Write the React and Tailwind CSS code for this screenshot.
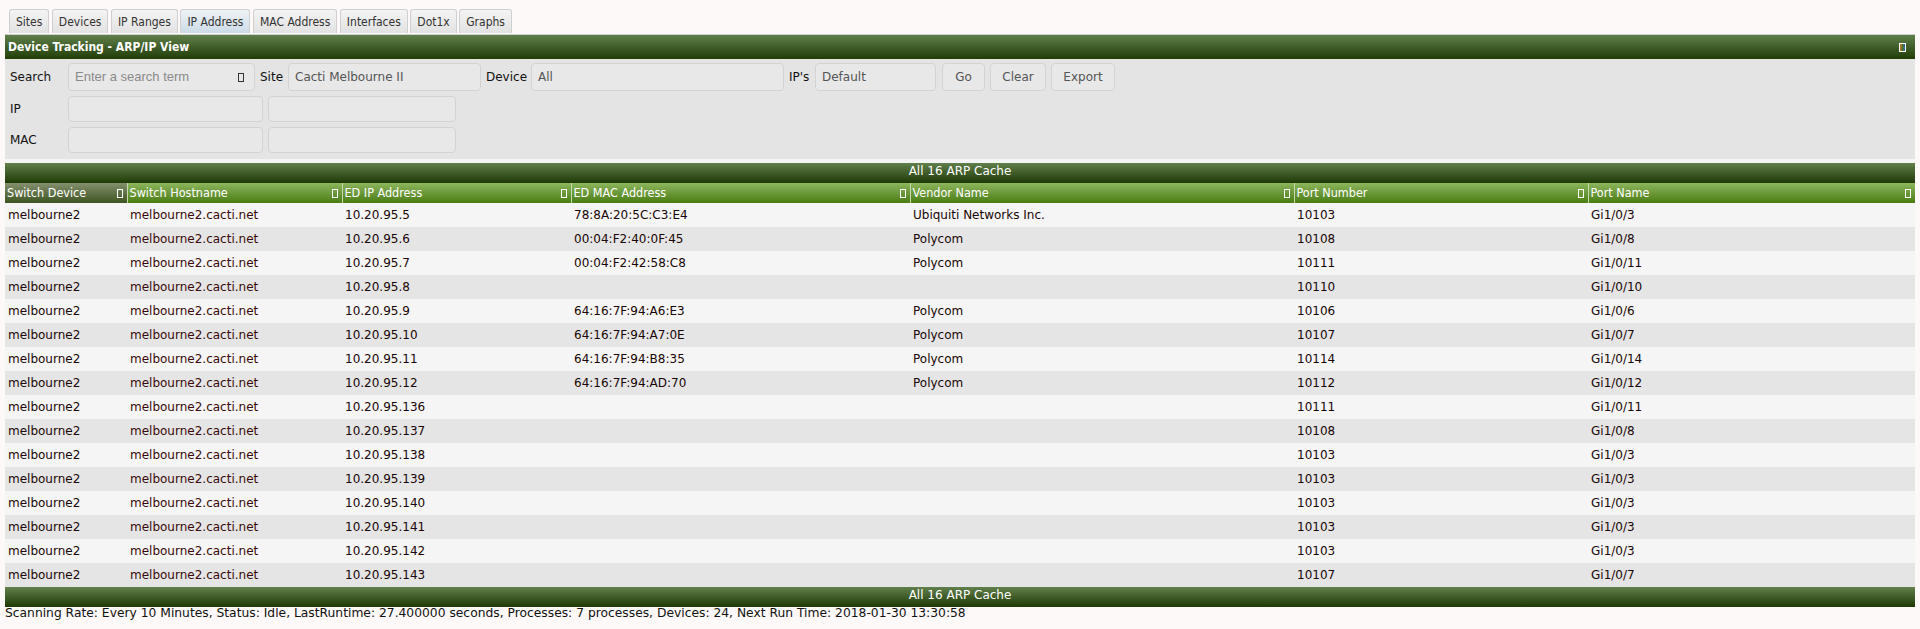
import React from "react";

const tabs = ["Sites", "Devices", "IP Ranges", "IP Address", "MAC Address", "Interfaces", "Dot1x", "Graphs"];

const cols = [
  { label: "Switch Device", w: 122 },
  { label: "Switch Hostname", w: 215 },
  { label: "ED IP Address", w: 229 },
  { label: "ED MAC Address", w: 339 },
  { label: "Vendor Name", w: 384 },
  { label: "Port Number", w: 294 },
  { label: "Port Name", w: 327 },
];

const rows = [
  ["10.20.95.5", "78:8A:20:5C:C3:E4", "Ubiquiti Networks Inc.", "10103", "Gi1/0/3"],
  ["10.20.95.6", "00:04:F2:40:0F:45", "Polycom", "10108", "Gi1/0/8"],
  ["10.20.95.7", "00:04:F2:42:58:C8", "Polycom", "10111", "Gi1/0/11"],
  ["10.20.95.8", "", "", "10110", "Gi1/0/10"],
  ["10.20.95.9", "64:16:7F:94:A6:E3", "Polycom", "10106", "Gi1/0/6"],
  ["10.20.95.10", "64:16:7F:94:A7:0E", "Polycom", "10107", "Gi1/0/7"],
  ["10.20.95.11", "64:16:7F:94:B8:35", "Polycom", "10114", "Gi1/0/14"],
  ["10.20.95.12", "64:16:7F:94:AD:70", "Polycom", "10112", "Gi1/0/12"],
  ["10.20.95.136", "", "", "10111", "Gi1/0/11"],
  ["10.20.95.137", "", "", "10108", "Gi1/0/8"],
  ["10.20.95.138", "", "", "10103", "Gi1/0/3"],
  ["10.20.95.139", "", "", "10103", "Gi1/0/3"],
  ["10.20.95.140", "", "", "10103", "Gi1/0/3"],
  ["10.20.95.141", "", "", "10103", "Gi1/0/3"],
  ["10.20.95.142", "", "", "10103", "Gi1/0/3"],
  ["10.20.95.143", "", "", "10107", "Gi1/0/7"],
];

function Box({ className = "" }) {
  return <span className={`inline-block w-[6px] h-[9px] border border-current ${className}`} />;
}

function Field({ w, h = "h-[28px]", children, className = "" }) {
  return (
    <div className={`${w} ${h} flex items-center rounded-[4px] border border-[#d3d3d3] bg-[#e8e8e8] px-[6px] ${className}`}>
      {children}
    </div>
  );
}

function Btn({ w, children }) {
  return (
    <div className={`${w} h-[28px] flex items-center justify-center rounded-[4px] border border-[#d3d3d3] bg-[#e8e8e8] text-[#555]`}>
      {children}
    </div>
  );
}

function GreenBar({ children }) {
  return (
    <div className="h-[20px] pt-[1px] leading-[14px] text-center bg-gradient-to-b from-[#62804c] to-[#1f3a03] text-white text-[12px] font-['DejaVu_Sans',sans-serif]">
      {children}
    </div>
  );
}

export default function App() {
  return (
    <div className="min-h-[629px] bg-[#fdf9f8] font-['DejaVu_Sans',sans-serif] text-[12px] text-[#111]">
      <div className="flex gap-[2.5px] pl-[9px] pt-[9px] h-[34px]">
        {tabs.map((t) => (
          <div
            key={t}
            className={`h-[24px] px-[6px] flex items-center rounded-t-[3px] border border-b-0 border-[#cfcfcf] text-[#333] font-['DejaVu_Sans_Condensed','DejaVu_Sans',sans-serif] text-[12px] ${
              t === "IP Address" ? "bg-gradient-to-b from-[#eef2f6] to-[#cddbe7]" : "bg-gradient-to-b from-[#f4f4f4] to-[#e2e2e2]"
            }`}
          >
            {t}
          </div>
        ))}
      </div>

      <div className="mx-[5px] border-t border-[#cfcfcf]">
        <div className="h-[24px] flex items-center justify-between px-[3px] bg-gradient-to-b from-[#60804a] to-[#213d05] text-white font-bold text-[12px] font-['DejaVu_Sans_Condensed','DejaVu_Sans',sans-serif]">
          <span>Device Tracking - ARP/IP View</span>
          <span className="mr-[6px] w-[7px] h-[9px] border border-white bg-gradient-to-r from-[#c86a1e] via-[#4c7a2a] to-[#2f5fa8]" />
        </div>

        <div className="bg-[#e4e4e4] pt-[4px] pb-[6px] flex flex-col gap-[5px]">
          <div className="flex items-center h-[28px]">
            <span className="w-[63px] pl-[5px]">Search</span>
            <Field w="w-[187px]" className="justify-between">
              <span className="text-[#8a8a8a] text-[13px] font-['Liberation_Sans',sans-serif]">Enter a search term</span>
              <Box className="text-[#333] mr-[4px]" />
            </Field>
            <span className="ml-[5px] w-[28px]">Site</span>
            <Field w="w-[193px]"><span className="text-[#555]">Cacti Melbourne II</span></Field>
            <span className="ml-[5px] w-[45px]">Device</span>
            <Field w="w-[253px]"><span className="text-[#555]">All</span></Field>
            <span className="ml-[5px] w-[26px]">IP's</span>
            <Field w="w-[121px]"><span className="text-[#555]">Default</span></Field>
            <div className="ml-[6px] flex gap-[5px]">
              <Btn w="w-[43px]">Go</Btn>
              <Btn w="w-[56px]">Clear</Btn>
              <Btn w="w-[64px]">Export</Btn>
            </div>
          </div>
          <div className="flex items-center h-[26px]">
            <span className="w-[63px] pl-[5px]">IP</span>
            <Field w="w-[195px]" h="h-[26px]" />
            <Field w="w-[188px]" h="h-[26px]" className="ml-[5px]" />
          </div>
          <div className="flex items-center h-[26px]">
            <span className="w-[63px] pl-[5px]">MAC</span>
            <Field w="w-[195px]" h="h-[26px]" />
            <Field w="w-[188px]" h="h-[26px]" className="ml-[5px]" />
          </div>
        </div>

        <div className="h-[4px] bg-[#f4f4f4]" />

        <GreenBar>All 16 ARP Cache</GreenBar>
        <table className="w-full table-fixed border-collapse">
          <colgroup>
            {cols.map((c) => (
              <col key={c.label} style={{ width: c.w }} />
            ))}
          </colgroup>
          <thead>
            <tr className="h-[20px]">
              {cols.map((c, i) => (
                <th
                  key={c.label}
                  className={`p-0 text-left font-normal text-white text-[12.5px] font-['DejaVu_Sans_Condensed','DejaVu_Sans',sans-serif] ${
                    i === 0 ? "bg-gradient-to-b from-[#84906e] to-[#3e5421]" : "bg-gradient-to-b from-[#8cb65c] to-[#4a7c0e]"
                  } ${i > 0 ? "border-l border-[#c8d8b0]" : ""}`}
                >
                  <div className="flex items-center justify-between pl-[2px] pr-[4px]">
                    <span>{c.label}</span>
                    <Box className="text-white" />
                  </div>
                </th>
              ))}
            </tr>
          </thead>
          <tbody>
            {rows.map((r, i) => (
              <tr key={i} className={`h-[24px] ${i % 2 === 0 ? "bg-[#f5f5f5]" : "bg-[#e5e5e5]"}`}>
                <td className="pl-[3px] text-[#1a0606]">melbourne2</td>
                <td className="pl-[3px] text-[#3a0a0a]">melbourne2.cacti.net</td>
                {r.map((v, j) => (
                  <td key={j} className="pl-[3px] text-[#1a0606]">{v}</td>
                ))}
              </tr>
            ))}
          </tbody>
        </table>
        <GreenBar>All 16 ARP Cache</GreenBar>
      </div>
      <div className="pl-[5px] pt-0 leading-[13px] text-[12.3px] text-[#111]">
        Scanning Rate: Every 10 Minutes, Status: Idle, LastRuntime: 27.400000 seconds, Processes: 7 processes, Devices: 24, Next Run Time: 2018-01-30 13:30:58
      </div>
    </div>
  );
}
